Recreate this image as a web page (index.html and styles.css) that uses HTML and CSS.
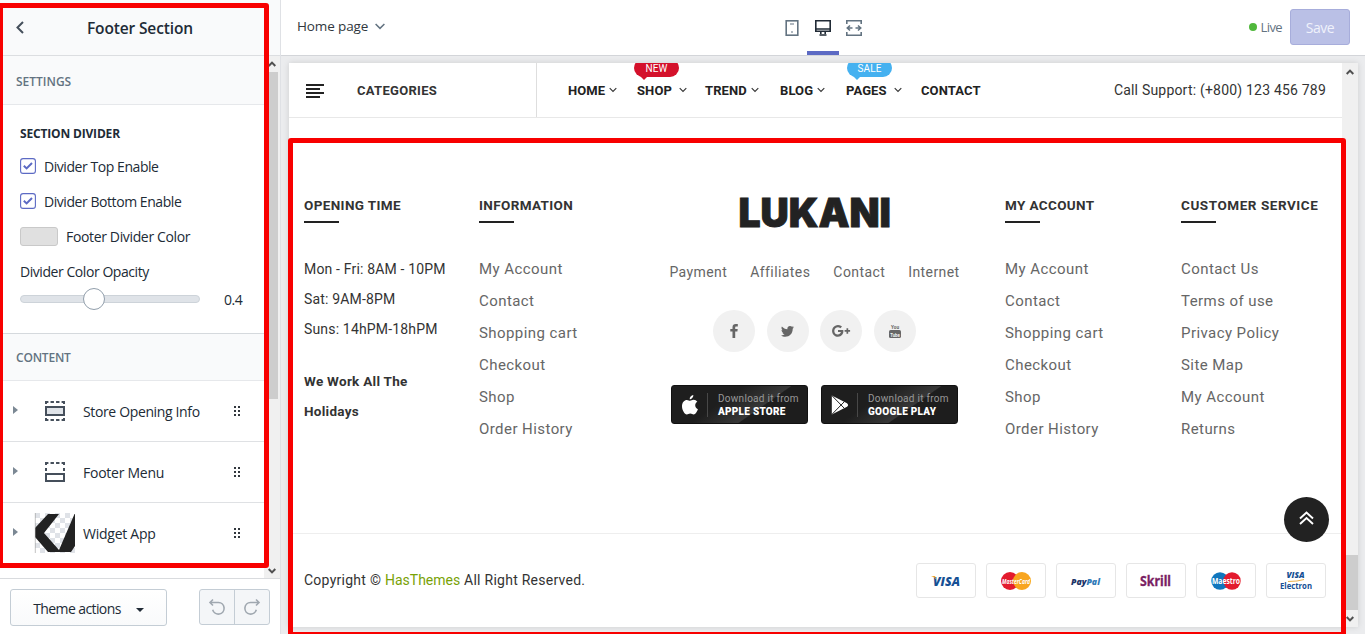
FILE: index.html
```html
<!DOCTYPE html>
<html lang="en">
<head>
<meta charset="utf-8">
<title>Footer Section</title>
<link rel="stylesheet" href="styles.css">
</head>
<body>
<svg width="0" height="0" class="defs">
  <symbol id="chev" viewBox="0 0 8 6"><path d="M.7 1.2 4 4.5 7.3 1.2" fill="none" stroke="currentColor" stroke-width="1.1"/></symbol>
  <symbol id="check" viewBox="0 0 16 16"><rect x=".6" y=".6" width="14.8" height="14.8" rx="2.5" fill="#fff" stroke="#5c6ac4" stroke-width="1.1"/><path d="M3.800 7.800 6.600 10.400 12 5" fill="none" stroke="#5c6ac4" stroke-width="2"/></symbol>
  <symbol id="grip" viewBox="0 0 8 12"><path d="M1 1h2v2H1zM5 1h2v2H5zM1 5h2v2H1zM5 5h2v2H5zM1 9h2v2H1zM5 9h2v2H5z" fill="#31373d"/></symbol>
  <symbol id="up" viewBox="0 0 8 6"><path d="M.7 5 4 1.600 7.300 5" fill="none" stroke="#505050" stroke-width="2"/></symbol>
  <symbol id="down" viewBox="0 0 8 6"><path d="M.7 1 4 4.400 7.300 1" fill="none" stroke="#505050" stroke-width="2"/></symbol>
</svg>
<div class="app">
  <aside class="sidebar">
    <header class="side-head">
      <svg class="back" width="8" height="13" viewBox="0 0 8 13"><path d="M7 1 1.500 6.500 7 12" fill="none" stroke="#454f5b" stroke-width="2"/></svg>
      <h1>Footer Section</h1>
    </header>
    <div class="side-body">
      <div class="side-content">
        <h2 class="band band-settings">SETTINGS</h2>
        <section class="settings">
          <h3>SECTION DIVIDER</h3>
          <label class="row"><svg width="16" height="16"><use href="#check"/></svg><span>Divider Top Enable</span></label>
          <label class="row"><svg width="16" height="16"><use href="#check"/></svg><span>Divider Bottom Enable</span></label>
          <div class="row"><i class="swatch"></i><span>Footer Divider Color</span></div>
          <div class="row"><span>Divider Color Opacity</span></div>
          <div class="slider-row"><div class="track"><i class="knob"></i></div><span>0.4</span></div>
        </section>
        <h2 class="band band-content">CONTENT</h2>
        <ul class="blocks">
          <li><i class="tri"></i>
            <span class="thumb"><svg width="20" height="20" viewBox="0 0 20 20"><path d="M0 1h20M0 19h20" stroke="#454f5b" stroke-width="2" stroke-dasharray="3.400 2.130"/><rect x="0" y="0" width="2" height="3" fill="#454f5b"/><rect x="18" y="0" width="2" height="3" fill="#454f5b"/><rect x="0" y="17" width="2" height="3" fill="#454f5b"/><rect x="18" y="17" width="2" height="3" fill="#454f5b"/><rect x="1" y="6" width="18" height="8" fill="#dfe3e8" stroke="#454f5b" stroke-width="2"/></svg></span>
            <span class="name">Store Opening Info</span><svg width="8" height="12"><use href="#grip"/></svg></li>
          <li><i class="tri"></i>
            <span class="thumb"><svg width="20" height="20" viewBox="0 0 20 20"><path d="M0 1h20" stroke="#454f5b" stroke-width="2" stroke-dasharray="3.400 2.130"/><path d="M1 0v9M19 0v9" stroke="#454f5b" stroke-width="2" stroke-dasharray="3 3"/><rect x="1" y="12" width="18" height="7" fill="none" stroke="#454f5b" stroke-width="2"/></svg></span>
            <span class="name">Footer Menu</span><svg width="8" height="12"><use href="#grip"/></svg></li>
          <li><i class="tri"></i>
            <span class="thumb"><svg width="40" height="40" viewBox="0 0 40 40"><defs><pattern id="chk" width="10" height="10" patternUnits="userSpaceOnUse"><rect width="10" height="10" fill="#fff"/><path d="M0 0h5v5H0zM5 5h5v5H5z" fill="#dfe2e7"/></pattern></defs><rect width="40" height="40" fill="url(#chk)"/><path d="M13 1H24L9 20 24 37 39.500 1H40V33L36 39H13L0 24V15Z" fill="#222"/><path d="M.3 0V40" stroke="#999" stroke-width=".6"/></svg></span>
            <span class="name">Widget App</span><svg width="8" height="12"><use href="#grip"/></svg></li>
        </ul>
      </div>
      <div class="side-scroll"><svg width="8" height="6"><use href="#up"/></svg><i></i><b></b><svg width="8" height="6"><use href="#down"/></svg></div>
    </div>
    <footer class="side-foot">
      <button class="theme"><span>Theme actions</span><i></i></button>
      <div class="history">
        <button><svg width="18" height="18" viewBox="0 0 18 18" fill="none" stroke="#a0a8b0" stroke-width="1.600"><path d="M5 1.500 2 4.500 5 7.500M2 4.500H10.500a5.800 5.800 0 1 1-5.800 7.300"/></svg></button>
        <button><svg width="18" height="18" viewBox="0 0 18 18" fill="none" stroke="#a0a8b0" stroke-width="1.600"><path d="M13 1.500 16 4.500 13 7.500M16 4.500H7.500a5.800 5.800 0 1 0 5.800 7.300"/></svg></button>
      </div>
    </footer>
  </aside>
  <main class="main">
    <header class="topbar">
      <div class="page-pick"><span>Home page</span><svg width="10" height="7" viewBox="0 0 10 7"><path d="M.6 1 5 5.400 9.400 1" fill="none" stroke="#637381" stroke-width="1.500"/></svg></div>
      <div class="devices">
        <span><svg width="14" height="16" viewBox="0 0 14 16"><rect x="1.200" y=".8" width="11.600" height="14.400" fill="none" stroke="#637381" stroke-width="1.600"/><path d="M5 4h4M6 12h2" stroke="#637381" stroke-width="1.200"/></svg></span>
        <span class="on"><svg width="16" height="16" viewBox="0 0 16 16"><path d="M.8.8h14.400v10.400H.8zM.8 9h14.400M5.800 11v3M10.200 11v3M4.500 15h7" fill="none" stroke="#212b36" stroke-width="1.600"/></svg></span>
        <span><svg width="16" height="16" viewBox="0 0 16 16" fill="none" stroke="#637381" stroke-width="1.600"><path d="M.8 4V.8h14.400V4M.8 12v3.200h14.400V12M1 8h5.500M9.500 8H15M4 5.500 1.300 8 4 10.500M12 5.500 14.700 8 12 10.500"/></svg></span>
      </div>
      <div class="save-wrap"><i class="dot"></i><span class="live">Live</span><button class="save">Save</button></div>
    </header>
    <div class="stage">
      <div class="frame">
        <div class="site">
          <nav class="nav">
            <div class="cats"><svg width="18" height="14" viewBox="0 0 18 14"><path d="M0 1h18M0 5h14M0 9h18M0 13h14" stroke="#222" stroke-width="2"/></svg><span>CATEGORIES</span></div>
            <div class="menu">
              <a>HOME<svg width="8" height="6"><use href="#chev"/></svg></a>
              <a><em class="tag red">NEW</em>SHOP<svg class="wide" width="8" height="6"><use href="#chev"/></svg></a>
              <a>TREND<svg width="8" height="6"><use href="#chev"/></svg></a>
              <a>BLOG<svg width="8" height="6"><use href="#chev"/></svg></a>
              <a><em class="tag blue">SALE</em>PAGES<svg class="wide" width="8" height="6"><use href="#chev"/></svg></a>
              <a>CONTACT</a>
            </div>
            <div class="call">Call Support: (+800) 123 456 789</div>
          </nav>
          <section class="columns">
            <div class="col"><h4>OPENING TIME</h4>
              <p class="hours">Mon - Fri: 8AM - 10PM<br>Sat: 9AM-8PM<br>Suns: 14hPM-18hPM</p>
              <p class="hours strong">We Work All The<br>Holidays</p></div>
            <div class="col"><h4>INFORMATION</h4>
              <ul class="links"><li>My Account</li><li>Contact</li><li>Shopping cart</li><li>Checkout</li><li>Shop</li><li>Order History</li></ul></div>
            <div class="brand">
              <svg class="logo" width="150" height="30" viewBox="0 0 150 30"><text x="-1.500" y="29.500" textLength="152.500" lengthAdjust="spacingAndGlyphs">LUKANI</text></svg>
              <div class="quick"><a>Payment</a><a>Affiliates</a><a>Contact</a><a>Internet</a></div>
              <div class="social">
                <a><svg width="8" height="14" viewBox="0 0 8 14"><path d="M7.800.1V2.400H6.400C5.400 2.400 5.200 2.900 5.200 3.600V5H7.700L7.400 7.500H5.200V14H2.500V7.500H.3V5H2.500V3.200C2.500 1.100 3.800 0 5.700 0Z" fill="#666"/></svg></a>
                <a><svg width="13" height="11" viewBox="0 0 13 11"><path d="M13 1.300 11.700 2.700C11.800 7.500 8.500 10.700 4.300 10.700 2.700 10.700 1.200 10.200 0 9.400 1.400 9.500 2.800 9.100 3.800 8.300 2.700 8.300 1.700 7.500 1.400 6.500H2.500C1.300 6.200.5 5.100.5 3.900L1.700 4.200C.5 3.400.1 1.900.9.600 2.300 2.200 4.200 3.200 6.400 3.300 6 1.400 7.300 0 9 0 9.800 0 10.500.3 11 .8L12.700.2 11.600 1.600Z" fill="#666"/></svg></a>
                <a><svg width="19" height="12" viewBox="0 0 19 12"><path d="M6 5.100h5.300c.6 3.800-1.700 6.700-5.300 6.700A5.900 5.900 0 1 1 10 1.600L8.400 3.200C6.100 1 2.300 2.700 2.300 5.900c0 4.200 5.800 4.700 6.600 1.200H6zM14.500 3.200h1.700v1.900h1.900v1.700h-1.900v1.900h-1.700V6.800h-1.900V5.100h1.900z" fill="#666"/></svg></a>
                <a><svg class="yt" width="12" height="14" viewBox="0 0 12 14"><rect y="6" width="12" height="8" rx="1.600" fill="#666"/><text x="2" y="5" textLength="8" lengthAdjust="spacingAndGlyphs" fill="#666">You</text><text x="1.200" y="12.500" textLength="9.600" lengthAdjust="spacingAndGlyphs" fill="#f1f1f1">Tube</text></svg></a>
              </div>
              <div class="stores">
                <a class="store"><svg width="16" height="20" viewBox="0 0 16 20"><path d="M11.300 0C11.500 2.300 9.500 4.300 7.700 4.300 7.500 2.300 9.300.3 11.300 0ZM8 5.700C9.200 5.700 10 4.800 11.600 4.800 13.100 4.800 14.500 5.600 15.300 6.800 12.200 8.800 12.800 12.800 15.900 14.200 15 16.500 13.400 19.400 11.700 19.400 10.300 19.400 9.900 18.600 8.300 18.600 6.600 18.600 6.100 19.400 4.800 19.400 2.700 19.400 0 15.200 0 11.200 0 7.300 2.400 4.900 4.900 4.900 6.300 4.900 7.300 5.700 8 5.700Z" fill="#fff"/></svg><i></i><span><small>Download it from</small><b>APPLE STORE</b></span></a>
                <a class="store"><svg width="18" height="20" viewBox="0 0 18 20"><path d="M.8.5 16 8.200Q18.200 10 16 11.800L.8 19.500Z" fill="#fff"/><path d="M1 .7 13.500 13.500M1 19.300 13.500 6.500" stroke="#222" stroke-width="1"/></svg><i></i><span><small>Download it from</small><b>GOOGLE PLAY</b></span></a>
              </div>
            </div>
            <div class="col"><h4>MY ACCOUNT</h4>
              <ul class="links"><li>My Account</li><li>Contact</li><li>Shopping cart</li><li>Checkout</li><li>Shop</li><li>Order History</li></ul></div>
            <div class="col last"><h4>CUSTOMER SERVICE</h4>
              <ul class="links"><li>Contact Us</li><li>Terms of use</li><li>Privacy Policy</li><li>Site Map</li><li>My Account</li><li>Returns</li></ul></div>
          </section>
          <section class="bottom">
            <p>Copyright © <a>HasThemes</a> All Right Reserved.</p>
            <div class="pays">
              <span><svg width="30" height="14" viewBox="0 0 30 14"><text class="visa" x="2" y="12" textLength="27" lengthAdjust="spacingAndGlyphs">VISA</text><path d="M0 2H4L5.500 6Q4 3 0 2Z" fill="#f0a830"/></svg></span>
              <span><svg width="30" height="20" viewBox="0 0 30 20"><circle cx="9" cy="10" r="9" fill="#e31b2e"/><circle cx="21" cy="10" r="9" fill="#f8a51f"/><text class="mc" x="1" y="12.500" textLength="28" lengthAdjust="spacingAndGlyphs">MasterCard</text></svg></span>
              <span><svg width="30" height="14" viewBox="0 0 30 14"><text class="pp" x="0" y="10.500" textLength="29" lengthAdjust="spacingAndGlyphs">Pay<tspan fill="#2f7ab8">Pal</tspan></text></svg></span>
              <span><svg width="32" height="16" viewBox="0 0 32 16"><text class="skrill" x="0" y="13" textLength="31" lengthAdjust="spacingAndGlyphs">Skrill</text></svg></span>
              <span><svg width="30" height="20" viewBox="0 0 30 20"><circle cx="9" cy="10" r="8.700" fill="#1076bd"/><circle cx="21" cy="10" r="8.700" fill="#e31b2e"/><text class="mae" x="1" y="13" textLength="28" lengthAdjust="spacingAndGlyphs">Maestro</text></svg></span>
              <span><svg width="32" height="22" viewBox="0 0 32 22"><text class="ve" x="6.500" y="8" textLength="18" lengthAdjust="spacingAndGlyphs">VISA</text><path d="M8 11.500Q18 11.500 24 9.500" stroke="#e9b04a" fill="none"/><text class="el" x="0" y="19" textLength="32" lengthAdjust="spacingAndGlyphs">Electron</text></svg></span>
            </div>
          </section>
          <a class="to-top"><svg width="15" height="14" viewBox="0 0 15 14"><path d="M1 7.500 7.500 1.500 14 7.500M1 13 7.500 7 14 13" fill="none" stroke="#fff" stroke-width="1.900"/></svg></a>
        </div>
        <div class="frame-scroll"><svg width="8" height="6"><use href="#up"/></svg><i></i><svg width="8" height="6"><use href="#down"/></svg></div>
      </div>
    </div>
  </main>
  <div class="mark mark-left"></div>
  <div class="mark mark-right"></div>
</div>
</body>
</html>
```
FILE: styles.css
```css
* { box-sizing: border-box; }
body { margin: 0; font-family: "Open Sans", "Noto Sans", sans-serif; color: #212b36; }
h1, h2, h3, h4, p, ul { margin: 0; padding: 0; }
ul { list-style: none; }
svg { display: block; flex: none; overflow: visible; }
button { margin: 0; padding: 0; font: inherit; }
.defs { position: absolute; }
.app { position: relative; display: flex; width: 1365px; height: 634px; overflow: hidden; background: #fff; }

/* sidebar */
.sidebar { width: 281px; flex: none; display: flex; flex-direction: column; border-right: 1px solid #dfe1e5; }
.side-head { height: 56px; display: flex; align-items: center; background: #f9fafb; border-bottom: 1px solid #dcdee1; padding-left: 16px; }
.side-head h1 { margin-left: 63px; font-size: 15.500px; line-height: 20px; font-weight: 600; letter-spacing: -.14px; }
.side-body { flex: 1; min-height: 0; display: flex; }
.side-content { width: 264px; overflow: hidden; }
.band { display: flex; align-items: center; padding-left: 16px; font-size: 12px; font-weight: 600; color: #637381; background: #f9fafb; border-bottom: 1px solid #e6e8eb; letter-spacing: -.2px; }
.band-settings { height: 49px; padding-top: 2px; letter-spacing: 0; }
.band-content { height: 48px; border-top: 1px solid #d5d9dd; }
.settings { height: 228px; padding: 18px 20px 0; font-size: 14px; letter-spacing: -.44px; }
.settings h3 { height: 26px; line-height: 22px; font-size: 12px; font-weight: 700; letter-spacing: -.17px; }
.row { display: flex; align-items: center; height: 35px; gap: 8px; }
.row svg { margin-top: -2px; }
.row .swatch + span { letter-spacing: -.35px; }
.swatch { width: 38px; height: 19px; background: #e0e0e0; border: 1px solid #c9c9c9; border-radius: 3px; }
.slider-row { display: flex; align-items: center; height: 19px; }
.track { position: relative; width: 180px; height: 8px; border-radius: 4px; background: #dfe3e8; border: 1px solid #cdd3d9; }
.knob { position: absolute; left: 62px; top: -8px; width: 22px; height: 22px; border-radius: 50%; background: #fff; border: 1px solid #919eab; }
.slider-row span { margin-left: 24px; padding-top: 2px; }
.blocks li { display: flex; align-items: center; height: 61px; border-bottom: 1px solid #dfe1e4; padding-left: 13px; font-size: 14px; letter-spacing: -.36px; }
.tri { border: 4.500px solid transparent; border-left: 5px solid #7b8894; border-right: 0; margin-top: -3px; }
.thumb { width: 40px; margin-left: 17px; display: flex; justify-content: center; }
.name { width: 150px; margin-left: 8px; padding-top: 1px; }
.blocks li:not(:first-child) .name { letter-spacing: -.25px; }
.side-scroll { width: 16px; background: #f0f0f0; display: flex; flex-direction: column; align-items: center; padding: 5px 0 4px; }
.side-scroll i { width: 14px; height: 327px; margin: 5px 2px 0 0; background: #cdcdcd; }
.side-scroll b { flex: 1; }
.side-foot { height: 56px; border-top: 1px solid #d9dbde; display: flex; align-items: flex-start; padding: 10px 10px 0; justify-content: space-between; background: #fff; }
.theme { width: 157px; height: 37px; border: 1px solid #c4cdd5; border-radius: 3px; background: linear-gradient(#fff, #f9fafb); display: flex; align-items: center; justify-content: center; gap: 15px; font-size: 14px; letter-spacing: -.6px; color: #212b36; padding-top: 1px; }
.theme i { border: 4px solid transparent; border-top: 4px solid #212b36; border-bottom: 0; margin-top: 4px; }
.history { display: flex; width: 71px; height: 36px; border: 1px solid #c4cdd5; border-radius: 3px; background: #f4f6f8; }
.history button { flex: 1; border: 0; background: none; display: grid; place-items: center; }
.history button + button { border-left: 1px solid #c4cdd5; }

/* editor top bar */
.main { flex: 1; min-width: 0; display: flex; flex-direction: column; }
.topbar { position: relative; z-index: 1; height: 56px; flex: none; display: grid; grid-template-columns: 495px 94px 1fr; border-bottom: 1px solid #d3d5d9; background: #fff; }
.page-pick { display: flex; align-items: center; gap: 7px; padding: 0 0 3px 16px; font-size: 13.500px; line-height: 18px; letter-spacing: -.12px; color: #31373d; }
.devices { display: grid; grid-template-columns: repeat(3, 31px); }
.devices span { display: grid; place-items: center; border-bottom: 4px solid transparent; padding-top: 4px; height: 55px; }
.devices .on { border-color: #5c6ac4; width: 32px; }
.save-wrap { display: flex; align-items: center; justify-content: flex-end; padding: 0 15px 2px 0; font-size: 13px; }
.dot { width: 8px; height: 8px; border-radius: 50%; background: #50b83c; }
.live { margin: 0 8px 0 4px; color: #637381; letter-spacing: -.6px; }
.save { width: 60px; height: 36px; border: 1px solid #a7addb; border-radius: 3px; background: #bac0e6; color: #f0f2fb; font-size: 14px; letter-spacing: -.5px; padding-top: 1px; }
.stage { flex: 1; padding: 7px 7px 7px 8px; background: #ebecee; }
.frame { height: 564px; display: flex; background: #fff; box-shadow: 0 0 6px rgba(0,0,0,.13); overflow: hidden; }
.frame-scroll { width: 16px; background: #f0f0f0; display: flex; flex-direction: column; align-items: center; padding: 6px 0 5px; }
.frame-scroll i { width: 15px; height: 55px; margin: 480px 0 6px; background: #cdcdcd; }

/* storefront */
.site { position: relative; width: 1053px; font-family: Roboto, sans-serif; color: #333; }
.nav { height: 55px; display: flex; align-items: center; border-bottom: 1px solid #e8e8e8; }
.cats { width: 248px; height: 54px; border-right: 1px solid #dedede; display: flex; align-items: center; gap: 33px; padding-left: 17px; font-size: 13px; font-weight: 700; letter-spacing: .3px; }
.cats svg { margin-top: 1px; }
.menu { width: 505px; display: grid; grid-template-columns: 69px 68px 75px 66px 75px 80px; margin-left: 31px; font-size: 13px; font-weight: 700; color: #222; letter-spacing: .1px; }
.menu a { position: relative; display: flex; align-items: center; }
.menu svg { margin-left: 4px; color: #333; }
.menu .wide { margin-left: 7px; }
.tag { position: absolute; left: -3px; top: -24px; width: 45px; height: 18px; padding-top: 4px; border-radius: 9px; font: 400 10px/12px Roboto, sans-serif; letter-spacing: .1px; color: #fff; text-align: center; }
.tag.blue { left: 1px; }
.tag::after { content: ""; position: absolute; left: 6px; top: 17px; border: 4px solid transparent; border-top-color: inherit; border-bottom: 0; }
.tag.red { background: #d4112b; border-color: #d4112b; }
.tag.blue { background: #45b1f0; border-color: #45b1f0; }
.call { flex: 1; padding-right: 16px; text-align: right; font-size: 14px; letter-spacing: .2px; white-space: nowrap; }
.columns { display: grid; grid-template-columns: 175px 176px 350px 175px 162px; padding: 78px 0 0 15px; height: 415px; }
.col h4 { height: 27px; font-size: 13.500px; line-height: 18px; font-weight: 700; white-space: nowrap; letter-spacing: .36px; }
.col.last { padding-left: 1px; }
.col.last h4 { letter-spacing: .55px; }
.col h4::after { content: ""; display: block; width: 35px; height: 2px; margin-top: 7px; background: #222; }
.hours { padding-top: 31px; font-size: 14px; line-height: 30px; white-space: nowrap; letter-spacing: .17px; }
.hours.strong { padding-top: 22px; font-weight: 700; font-size: 13.500px; letter-spacing: .28px; }
.links { padding-top: 30px; font-size: 15px; line-height: 32px; color: #666; letter-spacing: .43px; }
.brand { display: flex; flex-direction: column; align-items: center; margin-left: -16px; width: 351px; }
.logo { margin-top: 1px; }
.logo text { font: 900 40px Inter, sans-serif; fill: #222; stroke: #222; stroke-width: .9px; }
.quick { display: flex; gap: 23px; margin-top: 35px; font-size: 14px; line-height: 20px; color: #666; letter-spacing: .42px; }
.social { display: flex; gap: 11.500px; margin-top: 28px; }
.social a { width: 42px; height: 42px; border-radius: 50%; background: #f1f1f1; display: grid; place-items: center; }
.yt text { font: 700 6px Roboto, sans-serif; }
.stores { display: flex; gap: 13px; margin-top: 33px; }
.store { width: 137px; height: 39px; border-radius: 3px; border: 1px solid #111; background: linear-gradient(145deg, #1e1e1e 38%, #383838 63%, #1d1d1d 64%); display: flex; align-items: center; padding-left: 9px; }
.store svg { width: 18px; }
.store i { width: 1px; height: 24px; margin: 0 10px 0 8px; background: #484848; }
.store span { display: flex; flex-direction: column; white-space: nowrap; }
.store small { font-size: 10px; line-height: 13px; color: #999; letter-spacing: .28px; }
.store b { font-size: 10px; line-height: 13px; font-weight: 900; color: #fff; letter-spacing: .26px; }
.bottom { height: 94px; border-top: 1px solid #eee; display: flex; align-items: center; justify-content: space-between; padding: 0 16px 0 15px; font-size: 14px; letter-spacing: .26px; }
.bottom p { margin-top: -1px; }
.bottom a { color: #79a206; letter-spacing: .02px; }
.pays { display: flex; gap: 10px; }
.pays span { width: 60px; height: 35px; border: 1px solid #e6e6e6; border-radius: 3px; display: grid; place-items: center; letter-spacing: 0; }
.visa { font: italic 800 13px "Open Sans", sans-serif; fill: #154f94; }
.mc { font: italic 700 6.500px "Open Sans", sans-serif; fill: #fff; }
.pp { font: italic 800 9.500px "Open Sans", sans-serif; fill: #1c3466; }
.skrill { font: 700 14px "Noto Sans", sans-serif; fill: #7a1f63; stroke: #7a1f63; stroke-width: .3px; }
.mae { font: 700 8.500px "Open Sans", sans-serif; fill: #fff; }
.ve { font: italic 800 8px "Open Sans", sans-serif; fill: #154f94; }
.el { font: 700 8px "Open Sans", sans-serif; fill: #154f94; }
.to-top { position: absolute; left: 995px; top: 434px; width: 45px; height: 45px; border-radius: 50%; background: #222; display: grid; place-items: center; padding-bottom: 4px; }

/* highlight boxes */
.mark { position: absolute; border: 5px solid #f80000; border-radius: 3px; }
.mark-left { left: -2px; top: 3px; width: 271px; height: 565px; }
.mark-right { left: 288px; top: 138px; width: 1058px; height: 499px; }
```
